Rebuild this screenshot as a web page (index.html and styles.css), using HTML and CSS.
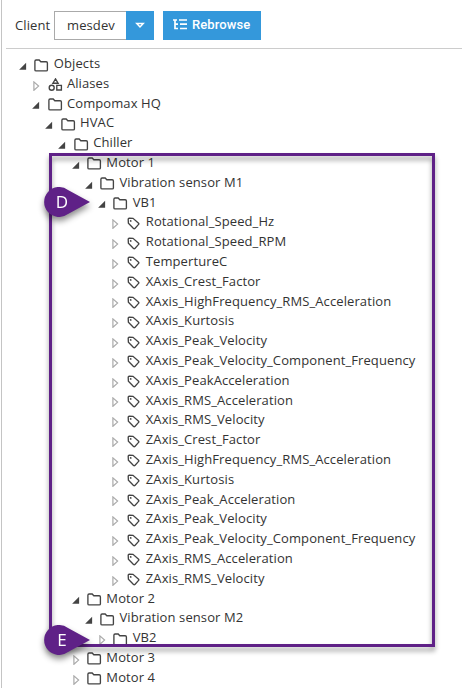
FILE: index.html
```
<!DOCTYPE html>
<html lang="en">
<head>
<meta charset="utf-8">
<title>Tag Browser</title>
<link rel="stylesheet" href="styles.css">
</head>
<body>
<svg class="defs" aria-hidden="true">
  <symbol id="folder" viewBox="0 0 15 13"><path d="M.9 10.9V2.2Q.9 1 2.1 1H5.2L6.8 2.7H12.2Q13.4 2.7 13.4 3.9V10.9Q13.4 11.8 12.2 11.8H2.1Q.9 11.8 .9 10.9Z"/></symbol>
  <symbol id="tag" viewBox="0 0 15 13"><path d="M2.2 2.2Q2.2 1.2 3.2 1.2L7 1.3L12.6 6.2Q13.2 6.8 12.6 7.4L8.9 11.4Q8.2 12 7.5 11.4L2.4 6.1Z"/><circle class="dot" cx="4.7" cy="3.9" r=".9"/></symbol>
  <symbol id="shapes" viewBox="0 0 15 13"><path d="M7.5 .9L10.1 5.2H4.9Z"/><circle cx="3.7" cy="9.7" r="2.5"/><path d="M8.8 7.4H13.4V12H8.8Z"/></symbol>
  <symbol id="open" viewBox="0 0 8 10"><path class="solid" d="M7.1 1.8V8.8H.1Z"/></symbol>
  <symbol id="closed" viewBox="0 0 8 10"><path class="hollow" d="M1.9 .9L6.6 5.1L1.9 9.3Z"/></symbol>
</svg>
<main class="panel">
  <header class="toolbar">
    <label class="label">Client</label>
    <div class="select"><span class="value">mesdev</span><span class="drop"><svg viewBox="0 0 10 7"><path d="M1.8 1.5H8.2L5 4.9Z"/></svg></span></div>
    <button class="button"><svg viewBox="0 0 15 13"><path d="M0 2H4M2 2V10.5H5M2 6.2H5M6 2H14M7 6.2H14M7 10.5H14"/></svg>Rebrowse</button>
  </header>
  <ul class="tree">
    <li><div class="row"><svg class="arrow"><use href="#open"/></svg><svg class="icon"><use href="#folder"/></svg>Objects</div>
      <ul>
        <li><div class="row"><svg class="arrow"><use href="#closed"/></svg><svg class="icon"><use href="#shapes"/></svg>Aliases</div></li>
        <li><div class="row"><svg class="arrow"><use href="#open"/></svg><svg class="icon"><use href="#folder"/></svg>Compomax HQ</div>
          <ul>
            <li><div class="row"><svg class="arrow"><use href="#open"/></svg><svg class="icon"><use href="#folder"/></svg>HVAC</div>
              <ul>
                <li><div class="row"><svg class="arrow"><use href="#open"/></svg><svg class="icon"><use href="#folder"/></svg>Chiller</div>
                  <ul>
                    <li><div class="row"><svg class="arrow"><use href="#open"/></svg><svg class="icon"><use href="#folder"/></svg>Motor 1</div>
                      <ul>
                        <li><div class="row"><svg class="arrow"><use href="#open"/></svg><svg class="icon"><use href="#folder"/></svg>Vibration sensor M1</div>
                          <ul>
                            <li><div class="row"><svg class="arrow"><use href="#open"/></svg><svg class="icon"><use href="#folder"/></svg>VB1</div>
                              <ul>
                                <li><div class="row"><svg class="arrow"><use href="#closed"/></svg><svg class="icon"><use href="#tag"/></svg>Rotational_Speed_Hz</div></li>
                                <li><div class="row"><svg class="arrow"><use href="#closed"/></svg><svg class="icon"><use href="#tag"/></svg>Rotational_Speed_RPM</div></li>
                                <li><div class="row"><svg class="arrow"><use href="#closed"/></svg><svg class="icon"><use href="#tag"/></svg>TempertureC</div></li>
                                <li><div class="row"><svg class="arrow"><use href="#closed"/></svg><svg class="icon"><use href="#tag"/></svg>XAxis_Crest_Factor</div></li>
                                <li><div class="row"><svg class="arrow"><use href="#closed"/></svg><svg class="icon"><use href="#tag"/></svg>XAxis_HighFrequency_RMS_Acceleration</div></li>
                                <li><div class="row"><svg class="arrow"><use href="#closed"/></svg><svg class="icon"><use href="#tag"/></svg>XAxis_Kurtosis</div></li>
                                <li><div class="row"><svg class="arrow"><use href="#closed"/></svg><svg class="icon"><use href="#tag"/></svg>XAxis_Peak_Velocity</div></li>
                                <li><div class="row"><svg class="arrow"><use href="#closed"/></svg><svg class="icon"><use href="#tag"/></svg>XAxis_Peak_Velocity_Component_Frequency</div></li>
                                <li><div class="row"><svg class="arrow"><use href="#closed"/></svg><svg class="icon"><use href="#tag"/></svg>XAxis_PeakAcceleration</div></li>
                                <li><div class="row"><svg class="arrow"><use href="#closed"/></svg><svg class="icon"><use href="#tag"/></svg>XAxis_RMS_Acceleration</div></li>
                                <li><div class="row"><svg class="arrow"><use href="#closed"/></svg><svg class="icon"><use href="#tag"/></svg>XAxis_RMS_Velocity</div></li>
                                <li><div class="row"><svg class="arrow"><use href="#closed"/></svg><svg class="icon"><use href="#tag"/></svg>ZAxis_Crest_Factor</div></li>
                                <li><div class="row"><svg class="arrow"><use href="#closed"/></svg><svg class="icon"><use href="#tag"/></svg>ZAxis_HighFrequency_RMS_Acceleration</div></li>
                                <li><div class="row"><svg class="arrow"><use href="#closed"/></svg><svg class="icon"><use href="#tag"/></svg>ZAxis_Kurtosis</div></li>
                                <li><div class="row"><svg class="arrow"><use href="#closed"/></svg><svg class="icon"><use href="#tag"/></svg>ZAxis_Peak_Acceleration</div></li>
                                <li><div class="row"><svg class="arrow"><use href="#closed"/></svg><svg class="icon"><use href="#tag"/></svg>ZAxis_Peak_Velocity</div></li>
                                <li><div class="row"><svg class="arrow"><use href="#closed"/></svg><svg class="icon"><use href="#tag"/></svg>ZAxis_Peak_Velocity_Component_Frequency</div></li>
                                <li><div class="row"><svg class="arrow"><use href="#closed"/></svg><svg class="icon"><use href="#tag"/></svg>ZAxis_RMS_Acceleration</div></li>
                                <li><div class="row"><svg class="arrow"><use href="#closed"/></svg><svg class="icon"><use href="#tag"/></svg>ZAxis_RMS_Velocity</div></li>
                              </ul>
                            </li>
                          </ul>
                        </li>
                      </ul>
                    </li>
                    <li><div class="row"><svg class="arrow"><use href="#open"/></svg><svg class="icon"><use href="#folder"/></svg>Motor 2</div>
                      <ul>
                        <li><div class="row"><svg class="arrow"><use href="#open"/></svg><svg class="icon"><use href="#folder"/></svg>Vibration sensor M2</div>
                          <ul>
                            <li><div class="row"><svg class="arrow"><use href="#closed"/></svg><svg class="icon"><use href="#folder"/></svg>VB2</div></li>
                          </ul>
                        </li>
                      </ul>
                    </li>
                    <li><div class="row"><svg class="arrow"><use href="#closed"/></svg><svg class="icon"><use href="#folder"/></svg>Motor 3</div></li>
                    <li><div class="row"><svg class="arrow"><use href="#closed"/></svg><svg class="icon"><use href="#folder"/></svg>Motor 4</div></li>
                  </ul>
                </li>
              </ul>
            </li>
          </ul>
        </li>
      </ul>
    </li>
  </ul>
</main>
<div class="frame"></div>
<div class="callout callout-d"><svg viewBox="0 0 46 30"><path d="M24 2.9L46 15L24 27.1A15 15 0 1 1 24 2.9Z"/></svg><span>D</span></div>
<div class="callout callout-e"><svg viewBox="0 0 46 30"><path d="M24 2.9L46 15L24 27.1A15 15 0 1 1 24 2.9Z"/></svg><span>E</span></div>
</body>
</html>
```
FILE: styles.css
```
* { box-sizing: border-box; }
body {
  margin: 0;
  height: 688px;
  overflow: hidden;
  position: relative;
  background: #fff;
  color: #333;
  font: 13px/20px "Open Sans", sans-serif;
}
.defs { display: none; }
.panel {
  height: 688px;
  margin-left: 1px;
  border-left: 1px solid #c4c4c4;
}
.toolbar {
  display: flex;
  align-items: center;
  height: 49px;
  margin-left: 4px;
  padding: 2px 0 0 9px;
  border-bottom: 1px solid #ccc;
}
.label { width: 39px; letter-spacing: .1px; }
.select { display: flex; width: 100px; height: 29px; }
.value {
  width: 72px;
  padding-left: 12px;
  line-height: 27px;
  letter-spacing: .1px;
  border: 1px solid #aaa;
  border-right: 0;
}
.drop {
  display: flex;
  flex: 1;
  align-items: center;
  justify-content: center;
  background: #3498db;
}
.drop svg { width: 10px; height: 7px; fill: none; stroke: #fff; stroke-width: 1.5; }
.button {
  display: flex;
  align-items: center;
  gap: 4px;
  width: 98px;
  height: 29px;
  margin-left: 9px;
  padding: 0 0 2px 10px;
  border: 0;
  background: #3498db;
  color: #fff;
  font: 500 13px Roboto, sans-serif;
  letter-spacing: .1px;
}
.button svg { flex: none; width: 15px; height: 13px; fill: none; stroke: #fff; stroke-width: 1.7; }
ul { margin: 0; padding: 0 0 0 13.15px; list-style: none; }
.tree { padding: 5px 0 0 17px; letter-spacing: .1px; }
.row {
  display: flex;
  height: 19.8px;
  line-height: 19.8px;
  white-space: nowrap;
}
.arrow { flex: none; width: 8px; height: 10px; margin-top: 6.8px; }
.icon {
  flex: none;
  width: 15px;
  height: 13px;
  margin: 4.5px 4.4px 0 7.4px;
  fill: none;
  stroke: #444;
  stroke-width: 1.35;
}
.solid { fill: #444; }
.hollow { fill: #fff; stroke: #aaa; stroke-width: 1.2; }
.dot { fill: #444; stroke: none; }
.frame {
  position: absolute;
  left: 49px;
  top: 153px;
  width: 386px;
  height: 494px;
  border: 3px solid #5f2187;
  filter: drop-shadow(0 4px 2.5px rgba(0, 0, 0, .4));
}
.callout {
  position: absolute;
  left: 44px;
  width: 46px;
  height: 30px;
  color: #fff;
  filter: drop-shadow(0 4px 3px rgba(0, 0, 0, .45));
}
.callout svg { display: block; width: 46px; height: 30px; fill: #5f2187; }
.callout span {
  position: absolute;
  left: 3px;
  top: 0;
  width: 30px;
  text-align: center;
  font-size: 17px;
  line-height: 30px;
}
.callout-d { top: 187px; }
.callout-e { top: 625px; }
```
